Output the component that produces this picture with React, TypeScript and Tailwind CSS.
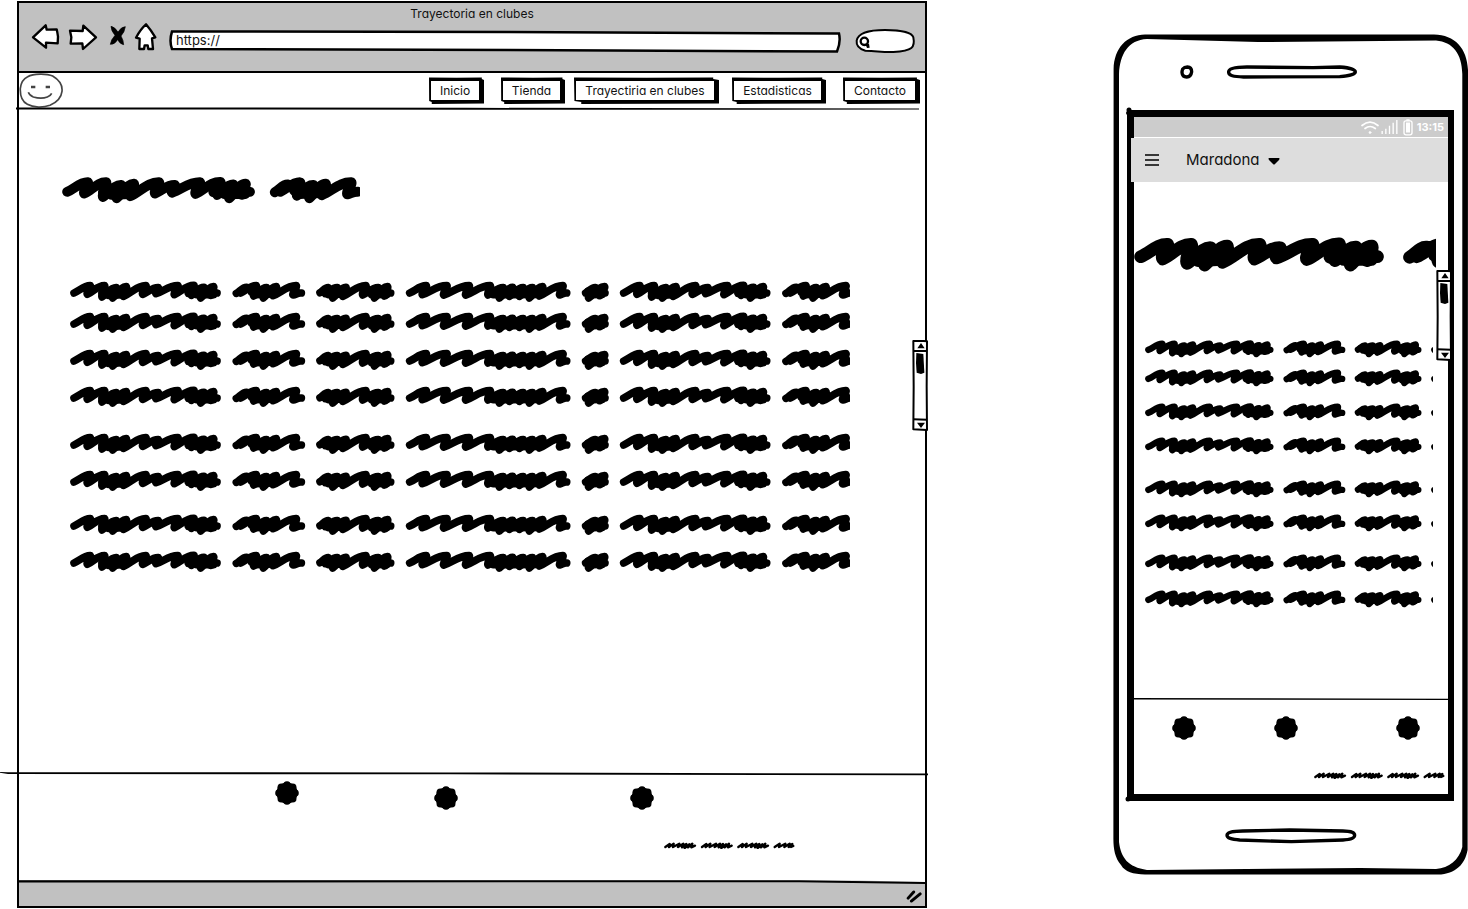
import type { ReactNode } from "react";

type Point = [number, number];

// Pen strokes alternate between a low point and a high point, starting low.
const LONG_WORD: Point[] = [
  [72, 69], [121, 47], [112, 73], [164, 47], [156, 81], [199, 53], [188, 84], [229, 50], [220, 79],
  [288, 47], [278, 73], [325, 53], [318, 71], [384, 47], [373, 74], [432, 46], [424, 76], [462, 52],
  [452, 84], [491, 50], [482, 76], [501, 69],
];
const MEDIUM_WORD: Point[] = [
  [559, 70], [590, 52], [572, 69], [619, 47], [611, 78], [650, 53], [640, 84], [679, 50], [669, 77],
  [739, 47], [729, 75], [754, 69],
];
const BLOCK_WORD: Point[] = [
  [810, 68], [835, 53], [826, 71], [862, 53], [848, 84], [888, 52], [878, 79], [948, 47], [938, 75],
  [985, 53], [973, 84], [1013, 50], [1003, 78], [1022, 69],
];
const WIDE_WORD: Point[] = [
  [1079, 69], [1129, 47], [1117, 74], [1191, 47], [1181, 75], [1258, 47], [1247, 75], [1321, 47],
  [1314, 75], [1360, 53], [1348, 84], [1388, 52], [1378, 79], [1420, 53], [1408, 79], [1448, 53],
  [1438, 84], [1478, 50], [1468, 78], [1539, 47], [1529, 75], [1550, 69],
];
const SHORT_WORD: Point[] = [
  [1607, 69], [1636, 53], [1616, 84], [1664, 50], [1649, 77], [1665, 69],
];

const DENSE_REPEAT =
  "M156 70 L190 62 L232 60 M176 76 L220 74 M415 70 L440 60 L490 60 M440 74 L490 74 M604 66 L630 60 L676 60 M616 74 L668 72";

const DENSE_PARTS = `${DENSE_REPEAT} M818 64 L884 60 M836 74 L880 72 M962 64 L1012 60 M965 74 L1010 73 M1330 64 L1474 60 M1330 74 L1470 73 M1614 64 L1658 60 M1618 74 L1656 73`;

function penPath(points: Point[]): string {
  return points
    .map(([x, y], i) => {
      if (i === 0) return `M${x} ${y}`;
      const [px, py] = points[i - 1];
      if (i % 2 === 1) {
        const dx = x - px;
        const dy = y - py;
        return `C${px + dx * 0.35} ${py + dy * 0.3} ${x - dx * 0.4} ${y - 1} ${x} ${y}`;
      }
      return `C${px + 4} ${py + 8} ${x - 5} ${y - 8} ${x} ${y}`;
    })
    .join(" ");
}

function Scribble({ units, className }: { units: number; className: string }) {
  return (
    <svg
      aria-hidden="true"
      viewBox={`60 30 ${units} 72`}
      preserveAspectRatio="none"
      className={className}
      fill="none"
      stroke="#000"
      strokeWidth="23"
      strokeLinecap="round"
      strokeLinejoin="round"
    >
      <path d={penPath(LONG_WORD)} />
      <path d={penPath(MEDIUM_WORD)} />
      <path d={penPath(BLOCK_WORD)} />
      <path d={penPath(WIDE_WORD)} />
      <path d={penPath(SHORT_WORD)} />
      <path d={DENSE_PARTS} />
      <g transform="translate(1649 0)">
        <path d={penPath(LONG_WORD)} />
        <path d={penPath(MEDIUM_WORD)} />
        <path d={DENSE_REPEAT} />
      </g>
    </svg>
  );
}

const NOTE_WORD =
  "M196 261 L209 252 L207 261 L221 251 L219 261 L238 251 L234 261 L250 251 L246 262 L259 252 L254 264 L268 253 L264 262 L277 251 L274 262 L285 257 M248 258 H278";

function FinePrint({ className }: { className: string }) {
  return (
    <svg
      aria-hidden="true"
      viewBox="192 243 393 24"
      className={className}
      fill="none"
      stroke="#000"
      strokeWidth="7"
      strokeLinecap="round"
      strokeLinejoin="round"
    >
      <path d={NOTE_WORD} />
      <path d={NOTE_WORD} transform="translate(110 0)" />
      <path d={NOTE_WORD} transform="translate(219 0)" />
      <path d="M524 261 L539 251 L537 261 L556 251 L553 261 L569 251 L566 261 L577 252 L573 261 L580 258" />
    </svg>
  );
}

function Dot({ className }: { className: string }) {
  return (
    <svg aria-hidden="true" viewBox="0 0 24 24" className={className}>
      <circle cx="12" cy="12" r="10.600" />
      <circle cx="12" cy="4" r="3.800" />
      <circle cx="12" cy="20" r="3.800" />
      <circle cx="4" cy="12" r="3.800" />
      <circle cx="20" cy="12" r="3.800" />
      <circle cx="6.300" cy="6.300" r="3.800" />
      <circle cx="17.700" cy="6.300" r="3.800" />
      <circle cx="6.300" cy="17.700" r="3.800" />
      <circle cx="17.700" cy="17.700" r="3.800" />
    </svg>
  );
}

function ScrollBar({ className }: { className: string }) {
  return (
    <svg aria-hidden="true" viewBox="1415 210 48 273" className={className}>
      <path
        d="M1419 213 L1440 212 L1460 214 L1459 350 L1460 480 L1419 478 L1420 350 Z"
        fill="#fff"
        stroke="#000"
        strokeWidth="6"
        strokeLinejoin="round"
      />
      <path d="M1419 243 H1460 M1419 448 L1460 449" stroke="#000" strokeWidth="6" />
      <path d="M1442 219 L1453 235 L1431 235 Z M1442 474 L1430 458 L1454 458 Z" />
      <path d="M1428 249 L1449 252 L1452 308 L1442 312 L1429 308 L1427 280 Z" />
    </svg>
  );
}

function NavButton({ children, className }: { children: ReactNode; className: string }) {
  return (
    <button type="button" className={`relative h-[27px] pr-[3px] pb-[3px] ${className}`}>
      <svg
        aria-hidden="true"
        viewBox="0 0 100 27"
        preserveAspectRatio="none"
        className="absolute inset-0 h-full w-full"
      >
        <path d="M0 .5 L50 .7 L96 .5 L96 2 L100 3 L100 26.500 L5 27 L5 25 L.3 24 Z" />
      </svg>
      <span className="relative mx-[2px] mt-[3px] flex h-[19px] items-center justify-center bg-white">
        {children}
      </span>
    </button>
  );
}

function BrowserToolbar() {
  return (
    <div className="flex h-7 items-end pr-[10px] pl-[13px]">
      <button type="button" aria-label="Atrás">
        <svg viewBox="96 72 84 84" className="block h-7 w-7 overflow-visible">
          <path
            d="M99 112 L137 76 L140 89 L170 88 Q172 96 174 110 L173 130 L138 128 L138 143 Z"
            fill="#fff"
            stroke="#000"
            strokeWidth="7"
            strokeLinejoin="round"
          />
        </svg>
      </button>
      <button type="button" aria-label="Adelante" className="ml-2">
        <svg viewBox="204 72 90 84" className="block h-7 w-[30px] overflow-visible">
          <path
            d="M210 92 L248 93 L250 77 L288 112 L249 147 L247 130 L212 131 L214 112 Z"
            fill="#fff"
            stroke="#000"
            strokeWidth="7"
            strokeLinejoin="round"
          />
        </svg>
      </button>
      <button type="button" aria-label="Detener" className="ml-[11px]">
        <svg viewBox="327 72 54 84" className="block h-7 w-[18px] overflow-visible" stroke="#000" strokeWidth="2" strokeLinejoin="round">
          <path d="M333 79 Q343 80 354 96 Q364 80 376 80 Q374 96 363 108 Q371 122 371 134 Q360 132 353 119 Q344 134 331 133 Q333 119 345 106 Q333 92 333 79 Z" />
        </svg>
      </button>
      <button type="button" aria-label="Inicio del navegador" className="ml-2">
        <svg viewBox="405 72 66 84" className="block h-7 w-[22px] overflow-visible">
          <path
            d="M438 73 Q454 92 466 112 L456 115 L459 147 L445 147 L443 136 L434 136 L432 147 L418 147 L419 116 L408 113 Q421 88 438 73 Z"
            fill="#fff"
            stroke="#000"
            strokeWidth="7"
            strokeLinejoin="round"
          />
        </svg>
      </button>
      <div className="relative ml-3 h-[22px] flex-1">
        <svg
          aria-hidden="true"
          viewBox="0 0 672 22"
          preserveAspectRatio="none"
          className="absolute inset-0 h-full w-full overflow-visible"
        >
          <path
            d="M3 1.500 Q0 11 3 19 L340 20 L668 21.500 Q672 12 670 3.500 L340 2 Z"
            fill="#fff"
            stroke="#000"
            strokeWidth="2.500"
          />
        </svg>
        <input
          type="text"
          aria-label="Dirección"
          defaultValue="https://"
          className="relative block h-5 w-full bg-transparent px-[7px] text-[13px] outline-none"
        />
      </div>
      <div className="relative ml-[14px] h-6 w-[60px]">
        <svg aria-hidden="true" viewBox="1305 84 180 72" className="absolute inset-0 h-full w-full overflow-visible">
          <path
            d="M1310 122 C1314 100 1345 90 1395 90 C1440 90 1476 97 1480 112 C1486 142 1478 152 1420 156 C1380 156 1355 152 1336 152 C1318 147 1308 138 1310 122 Z"
            fill="#fff"
            stroke="#000"
            strokeWidth="6"
          />
          <circle cx="1333" cy="124" r="11" fill="none" stroke="#000" strokeWidth="7" />
          <path d="M1328 134 L1347 131 L1349 143 L1341 144 L1339 139 Z" />
        </svg>
        <input type="search" aria-label="Buscar" className="relative block h-6 w-full bg-transparent pr-3 pl-5 outline-none" />
      </div>
    </div>
  );
}

function BrowserWindow() {
  return (
    <section className="mt-px border-2 border-black text-[12px] text-[#111]">
      <header className="border-b-2 border-black bg-[#c1c1c1] pt-px pb-[19px]">
        <h1 className="h-5 text-center leading-5">Trayectoria en clubes</h1>
        <BrowserToolbar />
      </header>

      <nav className="relative flex h-9 items-start pr-[5px]">
        <svg viewBox="57 219 132 105" className="h-[35px] w-11" fill="none" stroke="#444" strokeWidth="5">
          <path d="M83 230 C100 220 140 220 158 228 C178 240 188 256 186 274 C184 292 172 306 150 316 C130 323 100 323 82 313 C64 304 60 285 61 265 C63 248 70 236 83 230 Z" />
          <path d="M85 277 Q88 286 100 291 Q124 298 142 291 Q152 287 155 280" />
          <path d="M93 261 H106 M137 261 H150" strokeWidth="8" />
        </svg>
        <div className="mt-1 ml-auto flex">
          <NavButton className="w-[55px]">Inicio</NavButton>
          <NavButton className="ml-[17px] w-16">Tienda</NavButton>
          <NavButton className="ml-[9px] w-[145px]">Trayectiria en clubes</NavButton>
          <NavButton className="ml-[13px] w-[94px]">Estadisticas</NavButton>
          <NavButton className="ml-[17px] w-[77px]">Contacto</NavButton>
        </div>
        <svg
          aria-hidden="true"
          viewBox="0 0 903 4"
          preserveAspectRatio="none"
          className="absolute -bottom-[2px] -left-[3px] h-1 w-[calc(100%-3px)]"
        >
          <path d="M0 .4 L450 .8 L903 1.600 L903 2.600 L450 2.800 L0 2.400 Z" />
        </svg>
      </nav>

      <main className="relative min-h-[663px] pt-[66px] pl-[43px]">
        <Scribble units={699} className="block h-[31px] w-[298px]" />
        <div className="mt-[74px] ml-2 w-[780px] max-w-full">
          <Scribble units={2340} className="block h-6 w-full" />
          <Scribble units={2340} className="mt-[7px] block h-6 w-full" />
          <Scribble units={2340} className="mt-[13px] block h-6 w-full" />
          <Scribble units={2340} className="mt-[13px] block h-6 w-full" />
          <Scribble units={2340} className="mt-[23px] block h-6 w-full" />
          <Scribble units={2340} className="mt-[13px] block h-6 w-full" />
          <Scribble units={2340} className="mt-5 block h-6 w-full" />
          <Scribble units={2340} className="mt-[13px] block h-6 w-full" />
        </div>
        <ScrollBar className="absolute top-[231px] -right-[3px] h-[91px] w-4" />
      </main>

      <footer className="relative h-[108px] pt-[9px]">
        <svg
          aria-hidden="true"
          viewBox="0 0 927 4"
          preserveAspectRatio="none"
          className="absolute top-0 -left-[19px] h-1 w-[calc(100%+22px)]"
        >
          <path d="M0 0 L8 .2 L450 .4 L927 1.600 L927 3.200 L450 2.300 L8 2 L0 .8 Z" />
        </svg>
        <div className="flex pl-64">
          <Dot className="h-6 w-6" />
          <Dot className="mt-[5px] ml-[135px] h-6 w-6" />
          <Dot className="mt-[5px] ml-[172px] h-6 w-6" />
        </div>
        <FinePrint className="mt-[31px] ml-[645px] block h-2 w-[131px]" />
      </footer>

      <div className="relative flex h-[26px] items-center justify-end bg-[#c1c1c1] pr-[3px]">
        <svg
          aria-hidden="true"
          viewBox="0 0 906 4"
          preserveAspectRatio="none"
          className="absolute top-0 left-0 h-1 w-full"
        >
          <path d="M0 0 H906 V2 L840 .5 Z" fill="#fff" />
          <path d="M0 .3 L780 .3 L906 2 L906 4 L780 2.300 L0 2.500 Z" />
        </svg>
        <svg aria-hidden="true" viewBox="918 390 48 40" className="mt-[6px] h-[13px] w-4" stroke="#000" strokeLinecap="round">
          <path d="M924 415 L941 396" strokeWidth="9" />
          <path d="M934 424 L961 402" strokeWidth="9" />
        </svg>
      </div>
    </section>
  );
}

function StatusIcons() {
  return (
    <>
      <svg aria-hidden="true" viewBox="782 298 54 44" className="h-[15px] w-[18px]" fill="none" stroke="#fff" strokeWidth="5" strokeLinecap="round">
        <path d="M785 314 Q809 294 833 314 M794 323 Q809 311 825 323" />
        <circle cx="809" cy="335" r="3" fill="#fff" strokeWidth="2" />
      </svg>
      <svg aria-hidden="true" viewBox="842 300 50 42" className="ml-[2px] h-[14px] w-[17px]" stroke="#fff" strokeWidth="4">
        <path d="M845 342 V333 M856 342 V326 M867 342 V317 M878 342 V308 M889 342 V300" />
      </svg>
      <svg aria-hidden="true" viewBox="908 296 30 50" className="ml-[5px] h-[17px] w-[10px]">
        <rect x="911" y="301" width="24" height="42" rx="6" fill="none" stroke="#fff" strokeWidth="4" />
        <path d="M917 306 H929 V336 H917 Z M918 296 H928 V301 H918 Z" fill="#fff" />
      </svg>
    </>
  );
}

function Phone() {
  return (
    <section className="relative mt-[34px] h-fit">
      <svg
        aria-hidden="true"
        viewBox="0 0 355 841"
        preserveAspectRatio="none"
        className="absolute inset-0 h-full w-full"
      >
        <path
          fillRule="evenodd"
          d="M.6 35 C1 14 14 .6 32 .4 L321 .4 C342 1 354 14 355 36 L354.600 816 C352 830 343 840 325 840.600 L32 840.600 C20 840 12 838 8 831 C2 824 .4 815 .4 805 Z M6 40 C7 20 15 6 34 5 L145 8 L323 6.600 C340 8 349 20 349.300 40 L349.300 813 C346 826 336 834 323 835 L247 834 L34 836 C15 833 8 824 6 808 Z"
        />
      </svg>

      <div className="relative flex h-[76px] items-start pt-[31px] pl-[67px]">
        <svg aria-hidden="true" viewBox="240 138 42 42" className="h-[14px] w-[14px]">
          <path d="M248 150 Q253 144 262 144 Q275 145 275 158 Q273 173 260 174 Q247 174 246 161 Q246 155 248 150 Z" fill="#fff" stroke="#000" strokeWidth="10" />
        </svg>
        <svg aria-hidden="true" viewBox="380 135 392 42" className="ml-[33px] h-[14px] w-[130px]">
          <path
            d="M385 156 C385 146 405 141 440 141 L640 143 L720 141 C750 143 767 149 767 156 C766 163 748 168 720 170 L430 171 C400 170 384 167 385 156 Z"
            fill="#fff"
            stroke="#000"
            strokeWidth="10"
          />
        </svg>
      </div>

      <div className="relative mx-[14px] border-7 border-r-6 border-black bg-white">
        <svg aria-hidden="true" viewBox="0 0 6 8" className="absolute -top-[10px] -left-[8px] h-2 w-[6px]">
          <circle cx="3" cy="3" r="2.500" />
          <circle cx="2" cy="6" r="2" />
        </svg>
        <svg aria-hidden="true" viewBox="0 0 6 6" className="absolute -bottom-[8px] -left-[9px] h-[6px] w-[6px]">
          <circle cx="3" cy="3" r="2.500" />
        </svg>
        <div className="flex h-5 items-center justify-end bg-[#ccc] pr-1 text-white">
          <StatusIcons />
          <time className="ml-1 text-[11px] font-bold">13:15</time>
        </div>
        <header className="mt-px -ml-[3px] flex h-11 items-center bg-[#ddd] pl-[14px] text-[#111]">
          <button type="button" aria-label="Menú">
            <svg viewBox="0 0 14 12" className="block h-3 w-[14px]" stroke="#000" strokeWidth="1.500">
              <path d="M0 1 H14 M0 6 H14 M0 11 H14" />
            </svg>
          </button>
          <div className="ml-[27px] flex items-center">
            <select aria-label="Jugador" defaultValue="Maradona" className="appearance-none bg-transparent text-[15px] outline-none">
              <option>Maradona</option>
            </select>
            <svg aria-hidden="true" viewBox="0 0 12 8" className="mt-[2px] ml-2 h-2 w-3">
              <path d="M1 1 H11 Q12 1 11 3 L7 7 Q6 8 5 7 L1 3 Q0 1 1 1 Z" />
            </svg>
          </div>
        </header>

        <main className="relative min-h-[516px] pt-[53px]">
          <Scribble units={547} className="block h-10 w-[302px] max-w-full" />
          <div className="mt-16 mr-[15px] ml-[11px]">
            <Scribble units={1014} className="block h-5 w-full" />
            <Scribble units={1014} className="mt-[9px] block h-5 w-full" />
            <Scribble units={1014} className="mt-[14px] block h-5 w-full" />
            <Scribble units={1014} className="mt-[14px] block h-5 w-full" />
            <Scribble units={1014} className="mt-[23px] block h-5 w-full" />
            <Scribble units={1014} className="mt-[14px] block h-5 w-full" />
            <Scribble units={1014} className="mt-5 block h-5 w-full" />
            <Scribble units={1014} className="mt-4 block h-5 w-full" />
          </div>
          <ScrollBar className="absolute top-[88px] -right-1 h-[91px] w-4" />
        </main>

        <footer className="relative h-24 pt-[18px]">
          <svg
            aria-hidden="true"
            viewBox="0 0 314 3"
            preserveAspectRatio="none"
            className="absolute top-0 left-0 h-[3px] w-full"
          >
            <path d="M0 0 L314 .8 L314 2 L0 1.500 Z" />
          </svg>
          <div className="flex pl-[38px]">
            <Dot className="h-6 w-6" />
            <Dot className="ml-[78px] h-6 w-6" />
            <Dot className="ml-[98px] h-6 w-6" />
          </div>
          <FinePrint className="mt-[31px] mr-[3px] ml-auto block h-2 w-[131px]" />
        </footer>
      </div>

      <div className="relative flex h-[74px] justify-center pt-[27px]">
        <button type="button" aria-label="Inicio del teléfono" className="h-4">
          <svg viewBox="346 444 396 48" className="block h-4 w-[132px]">
            <path
              d="M352 466 C352 457 370 453 400 453 L540 450 L700 453 C725 453 735 459 735 466 C735 475 725 479 700 480 L545 485 L390 480 C365 478 352 475 352 466 Z"
              fill="#fff"
              stroke="#000"
              strokeWidth="10"
            />
          </svg>
        </button>
      </div>
    </section>
  );
}

export default function App() {
  return (
    <div className="grid grid-cols-[910fr_355fr] gap-x-[186px] overflow-hidden bg-white pl-[17px] font-['Inter','Liberation_Sans',sans-serif] [font-feature-settings:'cv11']">
      <BrowserWindow />
      <Phone />
    </div>
  );
}
